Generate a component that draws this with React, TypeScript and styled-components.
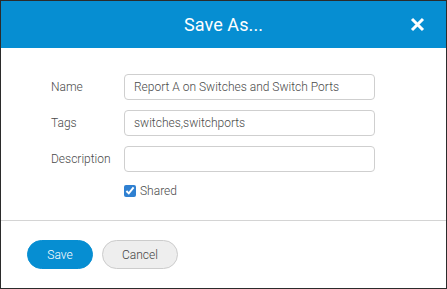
import { FC, useState } from "react";
import styled, { createGlobalStyle } from "styled-components";

const GlobalStyle = createGlobalStyle`
    html, body {
        margin: 0;
        padding: 0;
        background: #ffffff;
    }
    body {
        font-family: Roboto, "Liberation Sans", Arial, sans-serif;
    }
    * {
        box-sizing: border-box;
    }
`

const Dialog = styled.div`
    display: flex;
    flex-direction: column;
    width: 447px;
    height: 289px;
    border: 1px solid #2b2b2b;
    background: #ffffff;
`
const Header = styled.header`
    position: relative;
    display: flex;
    align-items: center;
    justify-content: center;
    height: 47px;
    background-color: #068ed2;
    color: #ffffff;
`
const Title = styled.h1`
    margin: 0;
    font-size: 18px;
    font-weight: 400;
    letter-spacing: 0.1px;
`
const CloseButton = styled.button`
    position: absolute;
    right: 20px;
    top: 14px;
    width: 18px;
    height: 18px;
    padding: 0;
    border: none;
    background: transparent;
    cursor: pointer;
    display: flex;
    align-items: center;
    justify-content: center;
`
const Body = styled.section`
    flex: 1;
    display: grid;
    grid-template-columns: 73px 251px;
    grid-auto-rows: min-content;
    row-gap: 10px;
    align-items: center;
    padding: 26px 0 0 50px;
    border-bottom: 1px solid #d4d4d4;
`
const Label = styled.label`
    font-size: 12px;
    font-weight: 300;
    color: #4a4a4a;
`
const TextInput = styled.input`
    height: 26px;
    width: 100%;
    padding: 0 9px;
    border: 1px solid #cfcfcf;
    border-radius: 4px;
    font-family: inherit;
    font-size: 12px;
    font-weight: 300;
    color: #4a4a4a;
    outline: none;
`
const CheckRow = styled.label`
    grid-column: 2;
    display: flex;
    align-items: center;
    gap: 4px;
    margin-top: 2px;
    font-size: 12px;
    font-weight: 300;
    color: #4a4a4a;

    input {
        margin: 0;
        width: 12px;
        height: 12px;
        accent-color: #2f80d1;
    }
`
const Footer = styled.footer`
    display: flex;
    gap: 9px;
    height: 67px;
    padding: 19px 0 0 26px;
`
const Button = styled.button<{ $primary?: boolean }>`
    height: 29px;
    width: ${(p) => (p.$primary ? "66px" : "76px")};
    border-radius: 15px;
    border: 1px solid ${(p) => (p.$primary ? "#068ed2" : "#cccccc")};
    background: ${(p) => (p.$primary ? "#068ed2" : "#eeeeee")};
    color: ${(p) => (p.$primary ? "#ffffff" : "#444444")};
    font-family: inherit;
    font-size: 12px;
    font-weight: 300;
    cursor: pointer;
`

const App: FC = () => {
    const [name, setName] = useState<string>("Report A on Switches and Switch Ports");
    const [tags, setTags] = useState<string>("switches,switchports");
    const [description, setDescription] = useState<string>("");
    const [shared, setShared] = useState<boolean>(true);

    return (
        <>
            <GlobalStyle />
            <Dialog>
                <Header>
                    <Title>Save As...</Title>
                    <CloseButton title="Close">
                        <svg width="15" height="15" viewBox="0 0 15 15">
                            <path d="M2 2 L13 13 M13 2 L2 13" stroke="#ffffff" strokeWidth="3" strokeLinecap="butt" />
                        </svg>
                    </CloseButton>
                </Header>
                <Body>
                    <Label htmlFor="name">Name</Label>
                    <TextInput id="name" value={name} onChange={(e) => setName(e.target.value)} />
                    <Label htmlFor="tags">Tags</Label>
                    <TextInput id="tags" value={tags} onChange={(e) => setTags(e.target.value)} />
                    <Label htmlFor="description">Description</Label>
                    <TextInput id="description" value={description} onChange={(e) => setDescription(e.target.value)} />
                    <CheckRow>
                        <input type="checkbox" checked={shared} onChange={(e) => setShared(e.target.checked)} />
                        Shared
                    </CheckRow>
                </Body>
                <Footer>
                    <Button $primary>Save</Button>
                    <Button>Cancel</Button>
                </Footer>
            </Dialog>
        </>
    );
};

export default App;
